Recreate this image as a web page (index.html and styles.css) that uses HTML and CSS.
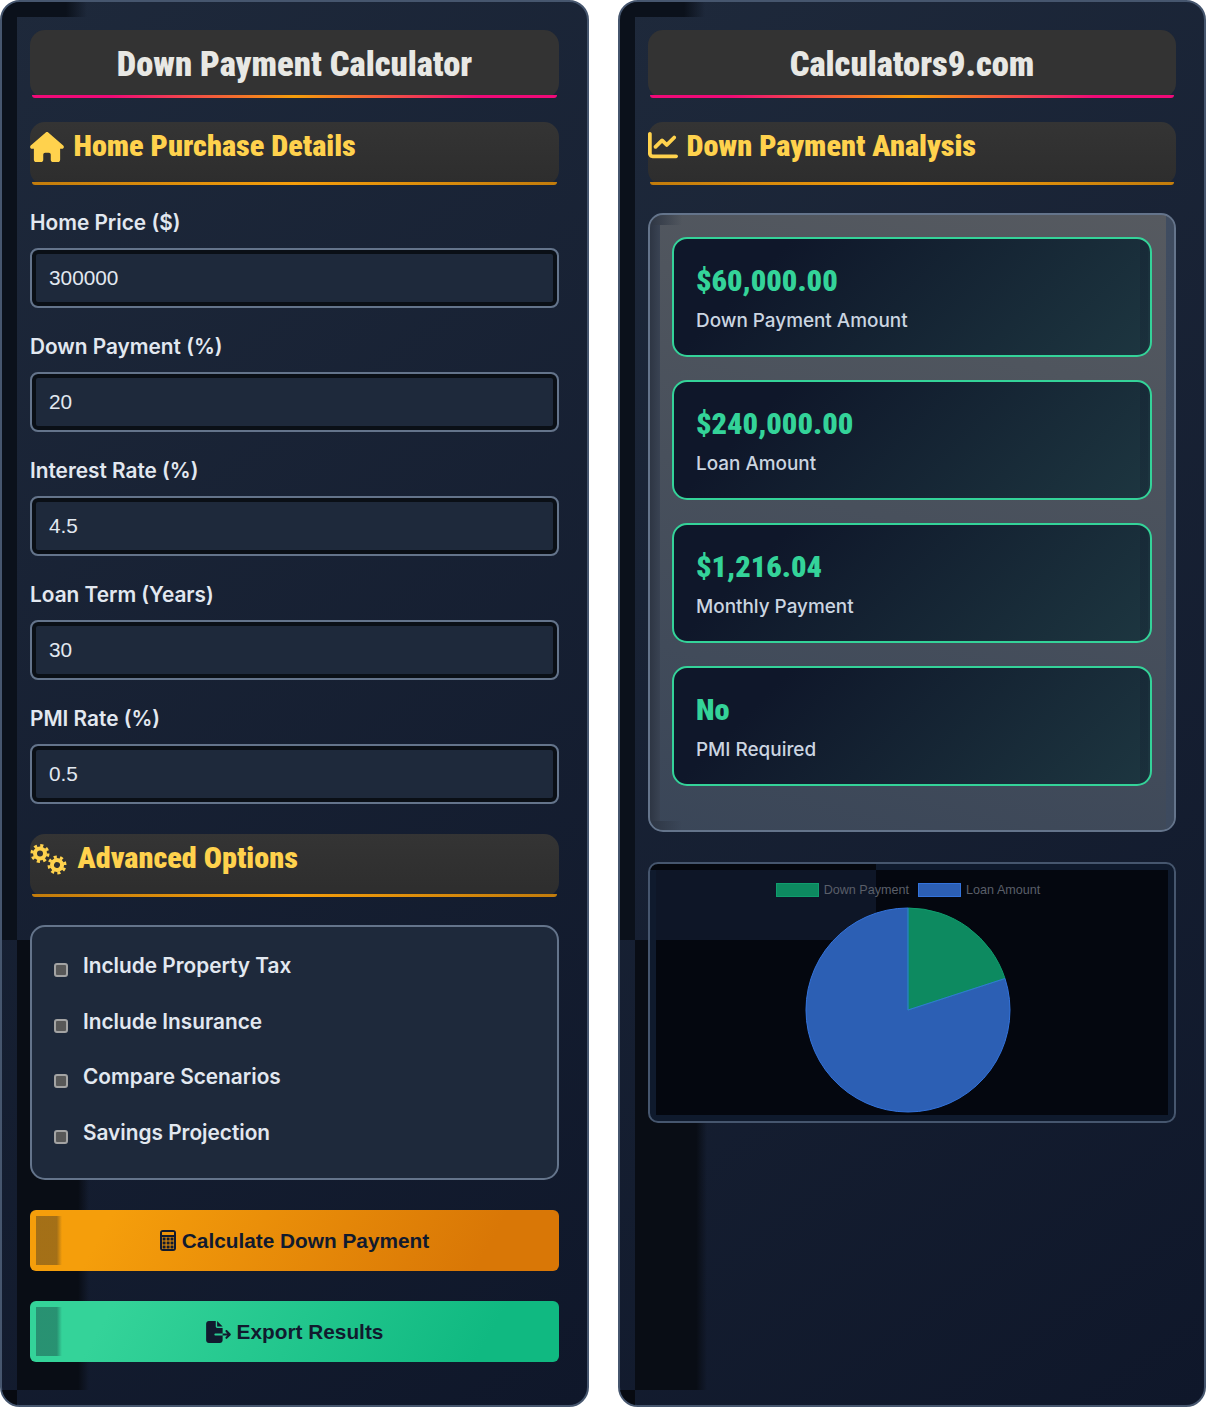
FILE: index.html
```html
<!DOCTYPE html>
<html lang="en">
<head>
    <meta charset="UTF-8">
    <title>Down Payment Calculator</title>
    <link rel="stylesheet" href="styles.css">
</head>
<body>
    <div class="calculator">

        <!-- inputs -->
        <section class="panel panel-left">
            <h1 class="main-title">Down Payment Calculator</h1>

            <h2 class="section-title">
                <svg class="ico-home" viewBox="0 0 576 512"><path d="M575.8 255.5c0 18-15 32.1-32 32.1h-32l.7 160.2c0 2.7-.2 5.4-.5 8.1V472c0 22.1-17.9 40-40 40H456c-1.1 0-2.2 0-3.3-.1c-1.4 .1-2.8 .1-4.2 .1H416 392c-22.1 0-40-17.9-40-40V448 384c0-17.7-14.3-32-32-32H256c-17.7 0-32 14.3-32 32v64 24c0 22.1-17.9 40-40 40H160 128.1c-1.5 0-3-.1-4.5-.2c-1.2 .1-2.4 .2-3.6 .2H104c-22.1 0-40-17.9-40-40V360c0-.9 0-1.9 .1-2.8V287.6H32c-18 0-32-14-32-32.1c0-9 3-17 10-24L266.4 8c7-7 15-8 22-8s15 2 21 7L564.8 231.5c8 7 12 15 11 24z"/></svg>
                Home Purchase Details
            </h2>

            <div class="field">
                <label>Home Price ($)</label>
                <input type="text" value="300000">
            </div>
            <div class="field">
                <label>Down Payment (%)</label>
                <input type="text" value="20">
            </div>
            <div class="field">
                <label>Interest Rate (%)</label>
                <input type="text" value="4.5">
            </div>
            <div class="field">
                <label>Loan Term (Years)</label>
                <input type="text" value="30">
            </div>
            <div class="field">
                <label>PMI Rate (%)</label>
                <input type="text" value="0.5">
            </div>

            <h2 class="section-title section-advanced">
                <svg class="ico-gears" viewBox="0 0 37 31">
                    <g transform="translate(10 9.5)">
                        <circle r="5" class="gear-ring"/>
                        <circle r="8" class="gear-teeth"/>
                    </g>
                    <g transform="translate(27 21) rotate(20)">
                        <circle r="5" class="gear-ring"/>
                        <circle r="8" class="gear-teeth"/>
                    </g>
                </svg>
                Advanced Options
            </h2>

            <div class="options">
                <label class="option"><input type="checkbox"><span>Include Property Tax</span></label>
                <label class="option"><input type="checkbox"><span>Include Insurance</span></label>
                <label class="option"><input type="checkbox"><span>Compare Scenarios</span></label>
                <label class="option"><input type="checkbox"><span>Savings Projection</span></label>
            </div>

            <button class="btn btn-orange">
                <svg class="ico-calc" viewBox="0 0 16 21">
                    <rect width="16" height="21" rx="3" fill="#111a2e"/>
                    <rect x="2" y="2" width="12" height="3" fill="#ee9409"/>
                    <rect x="2" y="7" width="12" height="12" fill="#ee9409"/>
                    <path fill="#111a2e" d="M2.6 7.6h3v3h-3zM6.6 7.6h3v3h-3zM10.5 7.6h3v3h-3zM2.6 11.5h3v3h-3zM6.6 11.5h3v3h-3zM10.5 11.5h3v3h-3zM2.6 15.4h3v3h-3zM6.6 15.4h3v3h-3zM10.5 15.4h3v3h-3z"/>
                </svg>
                Calculate Down Payment
            </button>

            <button class="btn btn-green">
                <svg class="ico-export" viewBox="0 0 576 512"><path d="M0 64C0 28.7 28.7 0 64 0H224V128c0 17.7 14.3 32 32 32H384V288H216c-13.3 0-24 10.7-24 24s10.7 24 24 24H384V448c0 35.3-28.7 64-64 64H64c-35.3 0-64-28.7-64-64V64zM384 336V288H494.1l-39-39c-9.4-9.4-9.4-24.6 0-33.9s24.6-9.4 33.9 0l80 80c9.4 9.4 9.4 24.6 0 33.9l-80 80c-9.4 9.4-24.6 9.4-33.9 0s-9.4-24.6 0-33.9l39-39H384zm0-208H256V0L384 128z"/></svg>
                Export Results
            </button>
        </section>

        <!-- results -->
        <section class="panel panel-right">
            <h1 class="main-title">Calculators9.com</h1>

            <h2 class="section-title section-analysis">
                <svg class="ico-chart" viewBox="0 0 512 512"><path d="M64 64c0-17.7-14.3-32-32-32S0 46.3 0 64V400c0 44.2 35.8 80 80 80H480c17.7 0 32-14.3 32-32s-14.3-32-32-32H80c-8.8 0-16-7.2-16-16V64zm406.6 86.6c12.5-12.5 12.5-32.8 0-45.3s-32.8-12.5-45.3 0L320 210.7l-57.4-57.4c-12.5-12.5-32.8-12.5-45.3 0l-112 112c-12.5 12.5-12.5 32.8 0 45.3s32.8 12.5 45.3 0L240 221.3l57.4 57.4c12.5 12.5 32.8 12.5 45.3 0l128-128z"/></svg>
                Down Payment Analysis
            </h2>

            <div class="results">
                <div class="result-card">
                    <div class="result-value">$60,000.00</div>
                    <div class="result-label">Down Payment Amount</div>
                </div>
                <div class="result-card">
                    <div class="result-value">$240,000.00</div>
                    <div class="result-label">Loan Amount</div>
                </div>
                <div class="result-card">
                    <div class="result-value">$1,216.04</div>
                    <div class="result-label">Monthly Payment</div>
                </div>
                <div class="result-card">
                    <div class="result-value">No</div>
                    <div class="result-label">PMI Required</div>
                </div>
            </div>

            <div class="chart-box">
                <div class="legend">
                    <span class="swatch swatch-green"></span><span class="legend-text">Down Payment</span>
                    <span class="swatch swatch-blue"></span><span class="legend-text">Loan Amount</span>
                </div>
                <svg class="pie" viewBox="0 0 206 206">
                    <path d="M103 103 L103 1 A102 102 0 1 0 200 71.5 Z" fill="#2c5fb4" stroke="#3373dc" stroke-width="1"/>
                    <path d="M103 103 L103 1 A102 102 0 0 1 200 71.5 Z" fill="#0d8a60" stroke="#0f9d6e" stroke-width="1"/>
                    <path d="M103 1 L103 103 L200 71.5" fill="none" stroke="#3373dc" stroke-width="1"/>
                </svg>
            </div>
        </section>

    </div>
</body>
</html>
```

FILE: styles.css
```css
/* --- base --- */
body {
    margin: 0;
    background: #fff;
    font-family: "Inter", "Liberation Sans", sans-serif;
}

.calculator {
    display: grid;
    grid-template-columns: 589px 588px;
    gap: 29px;
    height: 1407px;
}

/* --- panels --- */
.panel {
    position: relative;
    overflow: hidden;
    box-sizing: border-box;
    padding: 28px;
    border: 2px solid #46566e;
    border-radius: 20px;
    background: linear-gradient(145deg, #1e293b, #0f172a);
}

.panel > * {
    position: relative;
    z-index: 1;
}

.panel::before {
    content: "";
    position: absolute;
    inset: 0;
    z-index: 0;
    background:
        linear-gradient(#0b111b, #0b111b) 0 0 / 15px 938px no-repeat,
        linear-gradient(90deg, #0b111b 70%, transparent) 15px 0 / 70px 15px no-repeat,
        linear-gradient(90deg, #090d15 85%, transparent) 15px 938px / 72px 450px no-repeat,
        linear-gradient(#070a11, #070a11) 0 1388px / 15px 17px no-repeat;
}

/* --- headings --- */
.main-title,
.section-title {
    margin: 0;
    font-family: "Roboto", "Liberation Sans", sans-serif;
    font-stretch: condensed;
    font-weight: 900;
    background: #333;
    border-radius: 15px;
}

.main-title {
    height: 68px;
    margin-bottom: 24px;
    box-sizing: border-box;
    padding-top: 14px;
    font-size: 34.6px;
    line-height: 40px;
    text-align: center;
    color: #e8e8e4;
}

.main-title::after,
.section-title::after {
    content: "";
    position: absolute;
    left: 2px;
    right: 2px;
    bottom: 0;
    height: 3px;
    border-radius: 0 0 12px 12px;
}

.main-title::after {
    background: linear-gradient(90deg, #f00a78 15%, #f59e0b 50%, #f00a78 85%);
}

.section-title {
    display: flex;
    align-items: flex-start;
    gap: 9.5px;
    height: 63px;
    margin-bottom: 25px;
    box-sizing: border-box;
    padding-top: 6px;
    font-size: 30.2px;
    line-height: 36px;
    color: #ffd24d;
    background: linear-gradient(#343434, #2d2d2d);
}

.section-title::after {
    background: linear-gradient(90deg, #c27c0c, #f59e0b 50%, #c27c0c);
}

.section-title svg {
    fill: #ffd24d;
    flex: none;
}

.section-advanced {
    margin-top: 30px;
    margin-bottom: 28px;
}

.section-analysis {
    margin-bottom: 28px;
}

.ico-home { width: 34px; height: 30px; margin-top: 4px; }
.ico-chart { width: 30px; height: 30px; margin-top: 2px; margin-right: -1px; }
.ico-gears { width: 37px; height: 31px; margin-top: 4px; margin-right: 1px; }

.gear-ring { fill: none; stroke: #ffd24d; stroke-width: 4; }
.gear-teeth { fill: none; stroke: #ffd24d; stroke-width: 3; stroke-dasharray: 3.1 3.18; }

/* --- form --- */
.field {
    margin-bottom: 26px;
}

.field label {
    display: block;
    height: 26px;
    margin-bottom: 12px;
    font-size: 20.8px;
    font-weight: 600;
    line-height: 25px;
    color: #e2e8f0;
}

.field input {
    display: block;
    width: 100%;
    height: 60px;
    box-sizing: border-box;
    padding: 0 17px;
    border: 2px solid #64748b;
    border-radius: 8px;
    outline: none;
    background: #1e293b;
    box-shadow: inset 0 0 0 4px #0a0f16;
    font-family: "Liberation Sans", sans-serif;
    font-size: 20.8px;
    color: #e2e8f0;
}

.field:last-of-type {
    margin-bottom: 0;
}

.options {
    height: 255px;
    box-sizing: border-box;
    margin-bottom: 30px;
    padding: 11px 22px 0;
    border: 2px solid #64748b;
    border-radius: 15px;
    background: #1e293b;
}

.option {
    display: flex;
    align-items: flex-start;
    height: 55.7px;
    font-size: 20.8px;
    font-weight: 600;
    line-height: 56px;
    color: #e2e8f0;
}

.option input {
    appearance: none;
    width: 14px;
    height: 14px;
    margin: 25px 15px 0 0;
    box-sizing: border-box;
    border: 2px solid #a3a3a3;
    border-radius: 3px;
    background: #585858;
}

/* --- buttons --- */
.btn {
    position: relative;
    display: flex;
    align-items: center;
    justify-content: center;
    gap: 6px;
    width: 100%;
    height: 61px;
    margin-bottom: 30px;
    padding: 0;
    border: 0;
    border-radius: 6px;
    font-family: "Liberation Sans", sans-serif;
    font-size: 20.8px;
    font-weight: 700;
    color: #111a2e;
}

.btn::before {
    content: "";
    position: absolute;
    left: 6px;
    top: 6px;
    bottom: 6px;
    width: 26px;
    background: linear-gradient(90deg, rgba(20, 30, 45, 0.36) 80%, transparent);
}

.btn-orange { background: linear-gradient(120deg, #f59e0b 15%, #d97706 85%); }
.btn-green { background: linear-gradient(120deg, #34d399 15%, #10b981 85%); }

.ico-calc { width: 16px; height: 21px; }
.ico-export { width: 25px; height: 22px; fill: #111a2e; }

/* --- results --- */
.results {
    position: relative;
    overflow: hidden;
    box-sizing: border-box;
    height: 619px;
    padding: 22px 22px 0;
    border: 2px solid #64748b;
    border-radius: 15px;
    background: linear-gradient(195deg, #565a60, #3a4658);
}

.results::before {
    content: "";
    position: absolute;
    inset: 0;
    background:
        linear-gradient(90deg, #2e3644, #3a4353) 0 10px / 10px 596px no-repeat,
        linear-gradient(90deg, #2e3644, transparent) 0 0 / 32px 10px no-repeat,
        linear-gradient(90deg, #2e3644, transparent) 0 606px / 32px 10px no-repeat,
        linear-gradient(#3f4c60, #3d4a5e) 516px 0 / 10px 616px no-repeat;
}

.result-card {
    position: relative;
    height: 120px;
    box-sizing: border-box;
    margin-bottom: 23px;
    padding: 23px 22px 0;
    border: 2px solid #34d399;
    border-radius: 15px;
    background:
        linear-gradient(rgba(15, 23, 42, 0.18), rgba(15, 23, 42, 0.18)) right 2px top 0 / 8px 100% no-repeat,
        linear-gradient(135deg, #0f172a 20%, #1d3640);
}

.result-value {
    font-family: "Roboto", "Liberation Sans", sans-serif;
    font-stretch: condensed;
    font-size: 30.4px;
    font-weight: 900;
    line-height: 38px;
    color: #34d399;
}

.result-label {
    margin-top: 9px;
    font-size: 18.9px;
    font-weight: 500;
    line-height: 24px;
    color: #cbd5e1;
}

/* --- chart --- */
.chart-box {
    position: relative;
    height: 261px;
    box-sizing: border-box;
    margin-top: 30px;
    padding: 19px 8px 0 0;
    border: 2px solid #46566e;
    border-radius: 10px;
    background:
        linear-gradient(#0e1627, #0e1627) 6px 6px / 220px 70px no-repeat,
        linear-gradient(#04070f, #04070f) 6px 6px / 512px 245px no-repeat,
        linear-gradient(#05080f, #05080f) 0 0 / 226px 6px no-repeat,
        #0f1a2d;
}

.legend {
    position: relative;
    display: flex;
    align-items: center;
    justify-content: center;
    height: 14px;
    font-family: "Liberation Sans", sans-serif;
    font-size: 12.6px;
    color: #5a5f69;
}

.swatch {
    width: 41px;
    height: 12px;
    margin-right: 5px;
    border: 1px solid;
}

.swatch-green { background: #0d8a60; border-color: #0f9d6e; }
.swatch-blue { background: #2c5fb4; border-color: #3373dc; margin-left: 9px; }

.pie {
    position: relative;
    display: block;
    width: 206px;
    height: 206px;
    margin: 10px auto 0;
}
```
